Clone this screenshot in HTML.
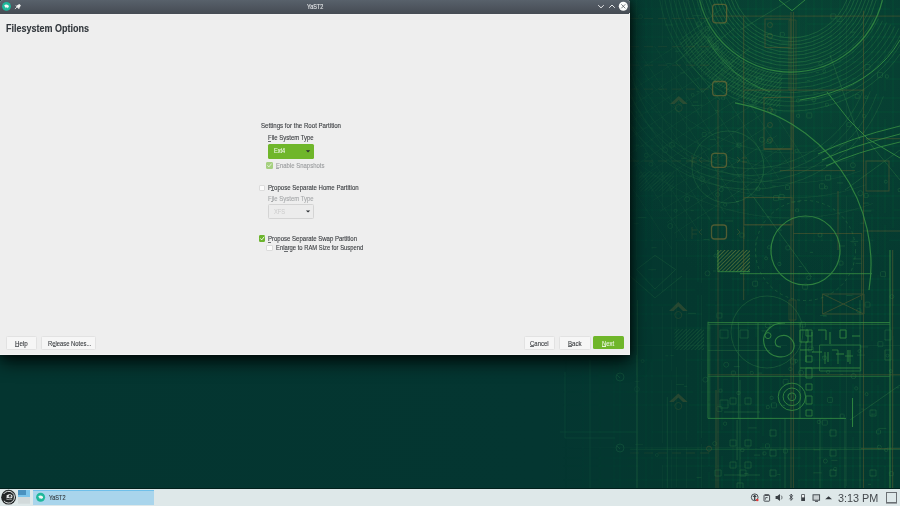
<!DOCTYPE html>
<html><head><meta charset="utf-8">
<style>
*{margin:0;padding:0;box-sizing:border-box}
html,body{width:900px;height:506px;overflow:hidden;background:#04342f;font-family:"Liberation Sans",sans-serif}
.a{position:absolute}
.t{position:absolute;white-space:nowrap;transform-origin:0 0;line-height:1;-webkit-text-stroke:.12px currentColor}
.u{position:absolute;height:.8px;background:#6a6d70}
#wall{left:0;top:0;width:900px;height:489px;background:linear-gradient(90deg,#04322e 0%,#04352f 55%,#0a4637 75%,#0c4a3a 100%)}
#win{left:0;top:0;width:630px;height:355px;background:#eeeeee;box-shadow:0 0 9px rgba(0,0,0,.55),0 7px 18px rgba(0,0,0,.8);border-radius:3px 3px 0 0}
#tb{left:0;top:0;width:630px;height:13.5px;background:linear-gradient(#58616b,#454b53);border-radius:3px 3px 0 0}
.btn{position:absolute;height:12.5px;background:#f6f6f6;border:1px solid #e2e2e2;border-radius:1.5px}
.gbtn{position:absolute;background:#6fb62a;border-radius:1.5px}
.cb{position:absolute;width:6.5px;height:6.5px;border:1px solid #dcdcdc;background:#fcfcfc;border-radius:1px}
#panel{left:0;top:489px;width:900px;height:17px;background:#dee8e9}
</style></head>
<body>
<div id="wall" class="a">
<svg class="a" style="left:0;top:0" width="900" height="489" viewBox="0 0 900 489">
 <defs>
  <linearGradient id="bg" x1="0" y1="0" x2="900" y2="0" gradientUnits="userSpaceOnUse">
   <stop offset="0" stop-color="#043530"/>
   <stop offset=".6" stop-color="#043631"/>
   <stop offset=".75" stop-color="#04382f"/>
   <stop offset="1" stop-color="#053a30"/>
  </linearGradient>
  <radialGradient id="glow" cx="790" cy="60" r="230" gradientUnits="userSpaceOnUse">
   <stop offset="0" stop-color="#0c4e39" stop-opacity=".55"/>
   <stop offset="1" stop-color="#0c4e39" stop-opacity="0"/>
  </radialGradient>
  <linearGradient id="fadeL" x1="560" y1="0" x2="740" y2="0" gradientUnits="userSpaceOnUse">
   <stop offset="0" stop-color="#fff" stop-opacity="0"/>
   <stop offset="1" stop-color="#fff" stop-opacity="1"/>
  </linearGradient>
  <mask id="mL" maskUnits="userSpaceOnUse" x="0" y="0" width="900" height="489"><rect width="900" height="489" fill="url(#fadeL)"/></mask>
  <pattern id="hatch" width="2.6" height="2.6" patternUnits="userSpaceOnUse" patternTransform="rotate(45)">
   <rect width=".9" height="2.6" fill="#3f8f48"/>
  </pattern>
  <pattern id="hatch2" width="2.6" height="2.6" patternUnits="userSpaceOnUse" patternTransform="rotate(45)">
   <rect width=".9" height="2.6" fill="#5f7a3a"/>
  </pattern>
  <filter id="soft" x="0" y="0" width="1" height="1"><feGaussianBlur stdDeviation=".3"/></filter>
 </defs>
 <rect width="900" height="489" fill="url(#bg)"/>
 <rect width="900" height="489" fill="url(#glow)"/>
 <g filter="url(#soft)" mask="url(#mL)">
 <g stroke="#1f6a45" stroke-width=".6" opacity=".38" fill="none"><path d="M566 0V155 M566 182V341 M566 355V489 M583 0V88 M583 93V264 M583 279V366 M583 369V489 M600 0V76 M600 78V255 M600 280V330 M600 349V489 M614 0V155 M614 175V255 M614 274V317 M614 343V489 M620 0V55 M620 56V144 M620 172V273 M620 292V339 M620 363V489 M636.5 0V152 M636.5 170V260 M636.5 276V375 M636.5 395V489 M646 0V41 M646 62V123 M646 137V248 M646 261V322 M646 344V449 M646 459V489 M652 0V113 M652 113V170 M652 188V255 M652 267V334 M652 361V475 M652 487V489 M662.6 0V44 M662.6 71V111 M662.6 117V210 M662.6 239V292 M662.6 307V443 M662.6 465V489 M671.3 0V58 M671.3 76V166 M671.3 190V299 M671.3 309V371 M671.3 380V489 M676.7 0V144 M676.7 168V238 M676.7 242V345 M676.7 367V432 M676.7 432V487 M686.5 0V164 M686.5 169V257 M686.5 271V441 M686.5 447V489 M698 0V138 M698 141V282 M698 295V389 M698 389V489 M701.7 0V117 M701.7 145V190 M701.7 196V283 M701.7 295V360 M701.7 361V438 M701.7 444V489 M709 0V42 M709 66V190 M709 216V331 M709 343V401 M709 403V466 M709 472V489 M716 0V134 M716 145V301 M716 305V468 M722 0V74 M722 101V239 M722 244V323 M722 332V430 M722 456V489 M733 0V88 M733 93V183 M733 204V343 M733 371V489 M738 0V60 M738 73V125 M738 128V195 M738 196V367 M738 397V489 M748 0V140 M748 148V295 M748 321V486 M756 0V173 M756 178V235 M756 239V337 M756 352V410 M756 418V489 M763 0V92 M763 115V159 M763 161V269 M763 282V436 M763 443V489 M771 0V85 M771 94V228 M771 244V317 M771 319V451 M771 455V489 M780 0V173 M780 191V266 M780 284V332 M780 361V405 M780 420V489 M799 0V119 M799 149V197 M799 197V256 M799 271V328 M799 351V470 M799 480V489 M806 0V59 M806 73V252 M806 263V314 M806 342V415 M806 440V489 M814 0V61 M814 82V243 M814 271V330 M814 357V489 M822 0V47 M822 74V241 M822 259V302 M822 321V458 M822 470V489 M831 0V58 M831 60V123 M831 143V212 M831 220V366 M831 389V489 M840 0V157 M840 171V329 M840 355V489 M846.6 0V172 M846.6 196V367 M846.6 367V486 M853 0V62 M853 77V122 M853 129V197 M853 212V376 M853 384V426 M853 437V489 M872 0V91 M872 107V190 M872 214V341 M872 362V489 M878 0V101 M878 111V254 M878 275V379 M878 385V489 M885 0V91 M885 119V213 M885 225V321 M885 339V460 M885 466V489 M893 0V167 M893 178V228 M893 250V306 M893 336V446 M893 472V489 M630 9H775 M790 9H890 M896 9H900 M630 24H786 M807 24H900 M630 37H775 M785 37H834 M835 37H900 M630 52H670 M691 52H792 M810 52H900 M630 62H664 M684 62H748 M760 62H900 M630 79H666 M690 79H788 M795 79H861 M886 79H900 M630 98H689 M703 98H760 M780 98H900 M630 112H710 M716 112H867 M875 112H900 M630 128H662 M686 128H836 M853 128H892 M897 128H900 M630 146H748 M765 146H900 M630 161H700 M712 161H799 M801 161H900 M630 176H759 M763 176H900 M630 196H710 M730 196H761 M773 196H900 M630 210H747 M761 210H874 M894 210H900 M630 218H691 M697 218H789 M801 218H853 M862 218H900 M630 240.2H664 M675 240.2H834 M836 240.2H875 M889 240.2H900 M630 256H767 M791 256H891 M630 279H667 M673 279H719 M732 279H770 M775 279H890 M630 290H695 M710 290H778 M794 290H900 M630 305H682 M706 305H792 M806 305H900 M630 314H702 M718 314H813 M822 314H900 M630 328H713 M722 328H788 M805 328H900 M630 345.6H787 M793 345.6H900 M560 360H619 M635 360H666 M685 360H811 M811 360H852 M868 360H900 M560 376H621 M636 376H689 M711 376H783 M785 376H900 M560 392H693 M701 392H794 M809 392H900 M560 405H676 M689 405H840 M856 405H900 M560 432H639 M652 432H689 M697 432H760 M782 432H817 M818 432H897 M560 447.7H648 M648 447.7H750 M760 447.7H880 M887 447.7H900 M560 458H717 M740 458H801 M817 458H900 M560 466H640 M662 466H803 M803 466H900 M560 480H695 M711 480H781 M798 480H880"/></g>
 <g stroke="#2e7d46" stroke-width=".6" opacity=".55" fill="none"><rect x="806.8" y="113.0" width="5" height="5" rx=".8"/><rect x="822.3" y="420.1" width="5" height="5" rx=".8"/><rect x="825.6" y="175.2" width="5" height="5" rx=".8"/><rect x="763.0" y="451.9" width="3" height="3" rx=".8"/><rect x="877.5" y="72.4" width="5" height="5" rx=".8"/><circle cx="717.6" cy="194.6" r="2"/><rect x="808.7" y="347.0" width="5" height="5" rx=".8"/><rect x="837.0" y="16.5" width="5" height="5" rx=".8"/><rect x="771.5" y="402.9" width="5" height="5" rx=".8"/><circle cx="801.1" cy="372.7" r="2.5"/><circle cx="866.6" cy="394.2" r="1.5"/><circle cx="707.5" cy="273.4" r="2.5"/><rect x="796.3" y="99.2" width="3" height="3" rx=".8"/><path d="M868.0 484.3h3"/><path d="M816.0 72.7h3"/><circle cx="852.9" cy="165.2" r="2.5"/><rect x="770.9" y="109.1" width="5" height="5" rx=".8"/><rect x="840.2" y="414.1" width="4" height="4" rx=".8"/><path d="M771.9 186.1h4"/><rect x="719.0" y="389.1" width="3" height="3" rx=".8"/><path d="M860.3 346.9h8"/><circle cx="813.9" cy="99.8" r="2"/><path d="M861.0 132.2h4"/><path d="M862.9 203.1h6"/><circle cx="853.5" cy="376.1" r="2.5"/><rect x="737.0" y="391.5" width="3" height="3" rx=".8"/><circle cx="702.1" cy="179.1" r="2.5"/><path d="M709.9 139.3h6"/><circle cx="767.6" cy="325.3" r="2.5"/><circle cx="715.4" cy="255.6" r="1.5"/><path d="M840.3 374.4h3"/><rect x="723.0" y="60.0" width="4" height="4" rx=".8"/><rect x="780.3" y="32.3" width="4" height="4" rx=".8"/><rect x="702.2" y="132.4" width="4" height="4" rx=".8"/><path d="M810.0 252.3h3"/><rect x="827.6" y="397.4" width="5" height="5" rx=".8"/><rect x="833.7" y="467.5" width="3" height="3" rx=".8"/><path d="M777.2 474.6h3"/><rect x="785.9" y="245.9" width="4" height="4" rx=".8"/><rect x="819.6" y="183.8" width="5" height="5" rx=".8"/><path d="M754.0 455.1h6"/><circle cx="705.4" cy="379.6" r="2.5"/><rect x="731.3" y="371.0" width="4" height="4" rx=".8"/><path d="M849.7 32.1h6"/><circle cx="714.7" cy="443.6" r="2"/><rect x="750.2" y="371.4" width="3" height="3" rx=".8"/><circle cx="887.5" cy="355.6" r="1.5"/><circle cx="820.7" cy="63.4" r="2"/><rect x="723.6" y="422.2" width="3" height="3" rx=".8"/><path d="M724.9 221.0h8"/><path d="M820.2 315.6h6"/><path d="M855.6 263.3h6"/><rect x="846.9" y="122.7" width="4" height="4" rx=".8"/><rect x="856.9" y="308.6" width="4" height="4" rx=".8"/><path d="M822.0 356.8h4"/><rect x="826.6" y="370.4" width="3" height="3" rx=".8"/><rect x="800.4" y="322.1" width="5" height="5" rx=".8"/><rect x="707.9" y="37.2" width="4" height="4" rx=".8"/><rect x="705.4" y="26.3" width="4" height="4" rx=".8"/><path d="M714.5 49.6h4"/><circle cx="826.2" cy="187.5" r="1.5"/><rect x="767.7" y="245.8" width="3" height="3" rx=".8"/><path d="M860.5 223.2h4"/><rect x="788.9" y="367.5" width="3" height="3" rx=".8"/><path d="M773.8 322.4h6"/><path d="M758.2 373.1h4"/><rect x="785.5" y="185.6" width="4" height="4" rx=".8"/><circle cx="715.7" cy="47.9" r="2"/><path d="M863.1 230.9h3"/><path d="M715.2 110.6h3"/><path d="M839.0 246.0h6"/><rect x="756.6" y="76.7" width="5" height="5" rx=".8"/><rect x="765.4" y="443.9" width="4" height="4" rx=".8"/><path d="M813.9 449.8h6"/><rect x="787.6" y="394.3" width="4" height="4" rx=".8"/><path d="M744.2 473.5h4"/><rect x="716.9" y="406.5" width="5" height="5" rx=".8"/><rect x="779.1" y="194.4" width="5" height="5" rx=".8"/><rect x="773.6" y="195.7" width="5" height="5" rx=".8"/><path d="M812.6 92.9h6"/><rect x="862.4" y="114.4" width="3" height="3" rx=".8"/><path d="M813.5 472.8h8"/><path d="M712.8 271.0h3"/><rect x="766.9" y="139.6" width="4" height="4" rx=".8"/><rect x="716.9" y="313.0" width="5" height="5" rx=".8"/><path d="M863.3 211.0h8"/><path d="M853.1 258.9h8"/><rect x="770.1" y="396.3" width="3" height="3" rx=".8"/><path d="M798.7 266.5h3"/><path d="M782.1 405.4h3"/><path d="M861.2 409.1h3"/><path d="M804.8 349.6h8"/><rect x="884.7" y="448.4" width="3" height="3" rx=".8"/><rect x="898.2" y="188.6" width="3" height="3" rx=".8"/><rect x="777.9" y="262.5" width="3" height="3" rx=".8"/><rect x="794.3" y="359.5" width="3" height="3" rx=".8"/><rect x="855.2" y="94.3" width="4" height="4" rx=".8"/><path d="M703.4 239.4h6"/><rect x="721.7" y="96.8" width="3" height="3" rx=".8"/><circle cx="820.0" cy="235.0" r="2"/><rect x="737.0" y="143.2" width="4" height="4" rx=".8"/><circle cx="825.4" cy="461.1" r="2"/><path d="M797.0 201.7h3"/><rect x="796.5" y="114.3" width="3" height="3" rx=".8"/><circle cx="860.3" cy="193.2" r="2.5"/><rect x="854.8" y="386.9" width="3" height="3" rx=".8"/><path d="M878.4 428.4h8"/><circle cx="859.4" cy="351.1" r="1.5"/><rect x="783.2" y="379.3" width="5" height="5" rx=".8"/><circle cx="726.2" cy="364.7" r="2.5"/><path d="M806.9 80.5h3"/><rect x="740.9" y="448.7" width="3" height="3" rx=".8"/><path d="M716.5 137.8h3"/><rect x="877.9" y="341.7" width="5" height="5" rx=".8"/><rect x="817.3" y="420.4" width="3" height="3" rx=".8"/><rect x="783.4" y="449.0" width="4" height="4" rx=".8"/><circle cx="741.7" cy="269.4" r="1.5"/><rect x="889.3" y="471.7" width="4" height="4" rx=".8"/><circle cx="715.2" cy="155.0" r="2.5"/><rect x="713.4" y="43.8" width="5" height="5" rx=".8"/><path d="M778.8 230.1h3"/><rect x="830.8" y="13.9" width="5" height="5" rx=".8"/><rect x="795.1" y="149.2" width="3" height="3" rx=".8"/><path d="M871.2 414.2h4"/><circle cx="758.1" cy="188.9" r="2"/><circle cx="890.8" cy="371.1" r="1.5"/><path d="M751.3 104.2h6"/><circle cx="761.9" cy="139.7" r="2.5"/><rect x="766.3" y="405.7" width="3" height="3" rx=".8"/><circle cx="824.3" cy="71.2" r="1.5"/><path d="M736.0 201.5h3"/><path d="M720.1 23.6h8"/><path d="M781.4 43.0h8"/><rect x="885.4" y="74.9" width="3" height="3" rx=".8"/><rect x="864.2" y="193.6" width="4" height="4" rx=".8"/><circle cx="824.6" cy="357.7" r="2"/><path d="M896.4 387.8h3"/><rect x="752.1" y="98.8" width="4" height="4" rx=".8"/><circle cx="721.3" cy="189.6" r="2"/><rect x="865.0" y="302.1" width="5" height="5" rx=".8"/><rect x="880.6" y="271.7" width="5" height="5" rx=".8"/><rect x="802.7" y="284.2" width="5" height="5" rx=".8"/><path d="M899.7 348.0h3"/><rect x="825.4" y="103.2" width="3" height="3" rx=".8"/><rect x="795.6" y="208.8" width="3" height="3" rx=".8"/><circle cx="885.8" cy="181.7" r="1.5"/><rect x="790.5" y="359.0" width="5" height="5" rx=".8"/><circle cx="808.7" cy="277.7" r="2"/><path d="M733.7 366.7h6"/><path d="M820.3 67.0h6"/><path d="M837.0 182.9h6"/><circle cx="866.2" cy="97.3" r="1.5"/><path d="M790.9 202.0h4"/><path d="M761.5 330.9h8"/><path d="M823.0 316.0h4"/><rect x="739.9" y="233.1" width="4" height="4" rx=".8"/><rect x="723.7" y="203.2" width="3" height="3" rx=".8"/><rect x="752.7" y="281.2" width="5" height="5" rx=".8"/><path d="M856.8 355.1h8"/><circle cx="891.9" cy="296.6" r="2"/><circle cx="879.3" cy="447.2" r="2"/><path d="M850.3 241.7h8"/><rect x="865.0" y="64.5" width="5" height="5" rx=".8"/><circle cx="766.1" cy="258.4" r="1.5"/><path d="M764.1 34.3h8"/><path d="M846.4 295.4h6"/><rect x="876.5" y="429.9" width="4" height="4" rx=".8"/><path d="M748.5 427.9h8"/><rect x="839.0" y="261.1" width="4" height="4" rx=".8"/><path d="M831.4 460.3h6"/><path d="M690.7 210.7h3"/><circle cx="675.5" cy="210.8" r="1.5"/><circle cx="636.9" cy="389.1" r="2.5"/><circle cx="670.3" cy="226.0" r="2.5"/><circle cx="650.9" cy="164.2" r="2"/><circle cx="687.1" cy="199.1" r="2.5"/><circle cx="646.2" cy="155.3" r="2"/><path d="M651.5 247.7h5"/><path d="M691.5 105.5h8"/><path d="M692.8 102.0h5"/><path d="M693.0 15.7h8"/><path d="M699.7 105.2h3"/><path d="M696.5 477.6h5"/><path d="M680.8 158.5h5"/><path d="M679.9 72.9h5"/><path d="M659.1 89.5h3"/><circle cx="679.7" cy="102.5" r="1.5"/><circle cx="665.1" cy="150.1" r="2.5"/><path d="M666.7 63.7h5"/><circle cx="692.7" cy="94.9" r="1.5"/><path d="M674.8 51.3h5"/><path d="M694.2 43.5h3"/><circle cx="672.0" cy="144.9" r="2.5"/><path d="M636.1 145.2h3"/><circle cx="642.6" cy="361.1" r="1.5"/><circle cx="699.1" cy="24.2" r="2.5"/><circle cx="656.9" cy="455.0" r="1.5"/><path d="M634.5 381.6h5"/><path d="M676.1 384.6h8"/><path d="M687.9 313.3h8"/><path d="M696.6 91.7h3"/><path d="M637.8 217.5h8"/><path d="M684.1 386.3h3"/><path d="M648.2 269.7h8"/><path d="M664.9 25.0h8"/><path d="M633.7 223.7h5"/><circle cx="640.6" cy="16.6" r="2"/><path d="M665.3 355.8h3"/><path d="M635.1 444.4h8"/><path d="M670.6 355.4h3"/></g>
 <g stroke="#348a48" stroke-width=".65" opacity=".6" fill="none"><path d="M735.2 0A60 60 0 0 0 846.8 0 M731.4 0A63.5 63.5 0 0 0 850.6 0 M727.7 0A67 67 0 0 0 854.3 0 M724.0 0A70.5 70.5 0 0 0 858.0 0 M720.3 0A74 74 0 0 0 861.7 0 M716.7 0A77.5 77.5 0 0 0 865.3 0 M713.0 0A81 81 0 0 0 869.0 0 M709.4 0A84.5 84.5 0 0 0 872.6 0 M705.8 0A88 88 0 0 0 876.2 0"/></g>
 <g stroke="#2f8a48" stroke-width=".6" opacity=".55" fill="none"><path d="M701.7 0.0A92 92 0 0 0 874.4 16.9 M697.0 0.0A96.5 96.5 0 0 0 878.5 18.8 M692.4 0.0A101 101 0 0 0 882.5 20.7 M687.8 0.0A105.5 105.5 0 0 0 886.6 22.6 M683.2 0.0A110 110 0 0 0 890.7 24.5 M678.6 0.0A114.5 114.5 0 0 0 894.8 26.4 M674.1 0.0A119 119 0 0 0 898.9 28.3 M669.5 0.0A123.5 123.5 0 0 0 902.9 30.2 M664.9 0.0A128 128 0 0 0 907.0 32.1 M659.8 0.0A133 133 0 0 0 911.5 34.2"/></g>
 <path d="M779.7 107.5A130 130 0 0 1 678.4 43.0L707.9 26.0A96 96 0 0 0 782.6 73.6Z" fill="url(#hatch)" opacity=".3"/>
 <path d="M708 40A115 115 0 0 0 770 92" stroke="#3c9844" stroke-width="1" opacity=".6" fill="none"/>
 <g stroke="#2a7446" stroke-width=".55" opacity=".4" fill="none"><path d="M617.4 0A175 175 0 0 0 850.9 142.4 M602.3 0A190 190 0 0 0 856.0 156.5 M587.2 0A205 205 0 0 0 861.1 170.6 M572.1 0A220 220 0 0 0 866.2 184.7 M552.0 0A240 240 0 0 0 873.1 203.5"/></g>
 <g stroke="#2f7f46" stroke-width=".6" opacity=".5" fill="none"><path d="M630.0 63.0A121 121 0 0 0 863.7 88.9 M630.0 92.0A128 128 0 0 0 870.3 91.3 M630.0 109.3A135 135 0 0 0 876.9 93.7 M630.0 123.4A142 142 0 0 0 883.4 96.1"/></g>
 <g transform="rotate(-33 690 130)" stroke="#2c7a45" stroke-width=".6" opacity=".3" fill="none"><path d="M620 52H760 M620 65H760 M620 78H760 M620 91H760 M620 104H760 M620 117H760 M620 130H760 M620 143H760 M620 156H760 M620 169H760 M620 182H760 M620 195H760 M620 208H760 M610 40V220 M626 40V220 M642 40V220 M658 40V220 M674 40V220 M690 40V220 M706 40V220 M722 40V220 M738 40V220 M754 40V220 M770 40V220"/></g>
 <g transform="rotate(-42 704 64)" opacity=".45"><rect x="684" y="44" width="40" height="40" fill="none" stroke="#3f8f48" stroke-width=".7"/></g>
 <rect x="717" y="250" width="33" height="21.7" fill="url(#hatch2)" opacity=".75"/>
 <rect x="674.5" y="329" width="29.5" height="21" fill="url(#hatch)" opacity=".3"/>
 <rect x="638.7" y="171.7" width="35" height="19.6" fill="url(#hatch)" opacity=".2"/>
 <g stroke="#2f8046" stroke-width=".7" opacity=".55" fill="none">
  <circle cx="728" cy="167" r="36"/>
  <circle cx="805.5" cy="250.5" r="50" stroke-dasharray="3 3"/>
  <circle cx="767" cy="332" r="36"/>
  <path d="M655 255.4 L675.6 269.6 L655 289 L636.5 269.6Z M630 276 L655 297.8 L682 276"/>
  <path d="M680 40 L720 10 M677 47 L720 100 M700 30 L745 85 M690 62 L735 28 M712 78 L750 48"/>
  <path d="M753 196.5 L811.7 277 M866 138.7 L900 180 M740 30 L790 0 M830 55 L860 140 M845 190 L900 150 M850 420 L900 385"/>
 </g>
 <g stroke="#635f2e" stroke-width=".9" opacity=".55" fill="none">
  <path d="M712 16.1H900 M791 11.9V489 M793.4 11.9V489 M863.5 10.7V489 M743.7 16V300 M718 100V489 M716 390V489"/>
  <path d="M743.7 90.1H864.6 M866 138.7H900 M780 170.6H855 M744 224.8H792 M793 233.5H862 M866 231H900 M708 374.8H900 M861 448.7H900 M892.6 250V489 M838 191V250 M861.7 233.5V300 M764 148.5H792"/>
  <rect x="765" y="19" width="26" height="28.4"/>
  <rect x="764" y="97.5" width="28" height="52"/>
  <rect x="744" y="197.6" width="48" height="27.2"/>
  <rect x="866" y="161" width="23" height="30"/>
  <path d="M822.6 294H864V314H822.6Z M822.6 294L864 314 M864 294L822.6 314"/>
  <path d="M789 20 h7 v70 h-7z M789 300 h7 v20 h-7z" stroke-width=".7"/>
  <circle cx="709" cy="448.7" r="2.5"/>
 </g>
 <g stroke="#635f2e" stroke-width=".8" opacity=".4" fill="none">
  <path d="M630 18.5H712 M630 46.7H712 M630 65.2H712 M630 89.1H712 M630 161H712 M630 453H709" stroke-dasharray="9 5"/>
 </g>
 <g stroke="#7d6f34" stroke-width="1.3" opacity=".7" fill="none">
  <rect x="712.6" y="4.3" width="14" height="18.5" rx="3"/>
  <rect x="712.6" y="81.5" width="14" height="14.2" rx="3"/>
  <rect x="711.5" y="153.3" width="15" height="14" rx="3"/>
  <rect x="711.5" y="225" width="15" height="14" rx="3"/>
 </g>
 <g fill="#7a6a36" opacity=".45">
  <path d="M670 104 L678.8 96 L687.6 104 L683 104 L678.8 100 L674.6 104Z"/>
  <path d="M669 311 L678.3 302 L687.6 311 L683 311 L678.3 306.5 L673.6 311Z"/>
  <path d="M669 402 L678.3 393.5 L687.6 402 L683 402 L678.3 397.5 L673.6 402Z"/>
 </g>
 <g stroke="#6a6a30" stroke-width=".6" opacity=".55" fill="none">
  <circle cx="678.8" cy="108" r="3.5"/><circle cx="678.3" cy="315" r="3.5"/><circle cx="678.3" cy="406" r="3.5"/>
  <circle cx="770" cy="110" r="2.5"/><circle cx="770" cy="125" r="2.5"/><circle cx="770" cy="140" r="2.5"/>
  <circle cx="770" cy="25" r="2.5"/><circle cx="770" cy="36" r="2.5"/>
  <path d="M702 157l-3 3 3 3 M737 157l3 3-3 3 M702 229l-3 3 3 3 M737 229l3 3-3 3 M692 158h5 M692 162h5 M692 230h5 M692 234h5 M742 158h5 M742 162h5"/>
  <path d="M692 155v12 M692 227v12 M744 227v12"/>
 </g>
 <g stroke="#3c9844" stroke-width="1" opacity=".75" fill="none">
  <path d="M699.6 0 A94 94 0 0 0 882.4 0" stroke-width="1.2"/>
  <path d="M735 102.9 A164 164 0 0 1 869 290" stroke-width="1.2"/>
  <path d="M900 40 Q878 78 830 93 Q815 98 800 100"/>
  <path d="M827 92 L849 120 L868 139 L900 158 M818 154 Q850 138 900 126 M822 160 Q852 146 900 134 M826 166 Q856 152 900 142"/>
  <circle cx="805.5" cy="250.5" r="34.5" stroke-width="1.2"/>
  <path d="M708 322.6H890 M708 321.7V418.4 M708 418.4H846 M890 250V489 M852.5 398V427 M740 273.7H872"/>
  <circle cx="791.9" cy="396.8" r="13.7"/><circle cx="791.9" cy="396.8" r="8.8"/><circle cx="791.9" cy="396.8" r="3.9"/>
  <path d="M785 323 C770 322 760 335 765 347 C770 358 785 360 792 352 C798 344 790 333 780 336 C773 339 774 347 781 347" stroke-width="1.1"/>
  <circle cx="768" cy="335.6" r="3"/>
  <path d="M800 330h8v12h-8z M812 332v10 M818 330h8v10 M830 332v12 M840 330h6v8h-6z M800 350h6v12 M812 352h10 M828 352v10 M836 354h8 M848 350v12 M852 336h8 M800 368h60"/>
  <path d="M718 250V271.7H750 M779 0 L792 10.7 L805 0"/>
  <path d="M819.6 345H860.7V371H819.6Z M758 323V419" opacity=".7"/>
  <path d="M708 324.4H890 M709.8 324V418.4 M800 323V419 M708 376.5H890" opacity=".55"/>
  <path d="M806 330h6v6h-6z M806 342h6v8h-6z M806 356h6v6h-6z M806 368h6v10h-6z M806 384h6v6h-6z M806 396h6v8h-6z M806 410h6v6h-6z" stroke-width=".8"/>
  <path d="M825 352v12 M832 350h6v14 M845 356h8 M850 350v14" stroke-width=".8"/>
 </g>
 <g stroke="#2f8046" stroke-width=".7" opacity=".6" fill="none">
  <path d="M720 330h8v8h-8z M740 330h8v8h-8z M720 400h8v8h-8z M770 430h6v6h-6z M770 450h6v6h-6z M770 470h6v6h-6z M740 470h6v6h-6z M830 430h6v6h-6z M830 450h6v6h-6z M830 470h6v6h-6z M870 410h6v6h-6z M870 470h6v6h-6z M715 470h6v6h-6z M885 330h6v10h-6z M885 350h6v10h-6z"/>
  <path d="M630 449.3H900 M860 300V489 M740 380V489 M785 418V489 M820 418V489 M845 418V489 M738.6 322V419 M708 350.4H770 M667.3 397V489 M637.5 300V489"/>
  <path d="M730 398h6v6h-6z M745 398h6v6h-6z M730 440h6v6h-6z M745 440h6v6h-6z M730 462h6v6h-6z M745 462h6v6h-6z M737 483h6v6h-6z M737 420v40 M724 412H760 M724 475H760"/>
 </g>
 </g>
 <g stroke="#1f6a45" stroke-width=".7" opacity=".55" fill="none"><circle cx="620" cy="377" r="4"/><circle cx="620" cy="448" r="4"/><path d="M565 372V438H615 M636.5 355V489 M560 432H636 M590 360V489" opacity=".6"/><path d="M617 375l3 3M617 446l3 3"/></g>
</svg>
</div>

<div id="win" class="a">
  <div id="tb" class="a"></div>
  <svg class="a" style="left:0;top:0" width="630" height="13" viewBox="0 0 630 13">
    <circle cx="6.5" cy="6.4" r="4.4" fill="#1db99b"/>
    <path d="M4.2 5.6 C5 4.4 7 4.3 8.3 5.3 C9 5.9 9 7 8.4 7.6 L7.8 7.4 L7.6 8.4 L7 7.6 L6 7.6 L5.6 8.4 L5.4 7.2 C4.9 6.9 4.6 6.4 4.2 5.6Z" fill="#f4f7f6"/>
    <path d="M15.2 8.8 L17.2 6.8" stroke="#f0f0f0" stroke-width=".8" stroke-linecap="round"/><path d="M16.4 5.8 L19.4 3.9 L20.9 5.4 L19 8.4 Z" fill="#f2f2f2"/><path d="M15.9 5.6 L19.2 8.9" stroke="#f2f2f2" stroke-width="1"/>
    <path d="M598.2 5.2 L601 7.8 L603.8 5.2" stroke="#e6e8ea" stroke-width="1" fill="none"/>
    <path d="M609.2 7.8 L612 5 L614.8 7.8" stroke="#e6e8ea" stroke-width="1" fill="none"/>
    <circle cx="623.3" cy="6.3" r="4.5" fill="#fcfcfc"/>
    <path d="M621.3 4.3 L625.3 8.3" stroke="#4f545a" stroke-width=".75"/><path d="M625.3 4.3 L621.3 8.3" stroke="#4f545a" stroke-width=".75"/>
  </svg>
  <div class="t" style="left:306.5px;top:4.3px;font-size:6.3px;color:#e6e8ea;transform:scaleX(.87);-webkit-text-stroke:.1px currentColor">YaST2</div>
  <div class="a" style="left:0;top:13.5px;width:630px;height:1px;background:#f1f1f1"></div>
  <div class="a" style="left:0;top:354px;width:630px;height:1px;background:#f4f4f4"></div>
  <div class="a" style="left:629px;top:13px;width:1px;height:342px;background:#f2f2f2"></div>
  <!-- title -->
  <div class="t" style="left:6px;top:22.5px;font-size:11px;font-weight:bold;color:#31363b;transform:scaleX(.818)">Filesystem Options</div>
  <div class="t" style="left:261px;top:121.5px;font-size:7px;color:#3a3d40;transform:scaleX(.875)">Settings for the Root Partition</div>
  <div class="t" style="left:268px;top:134px;font-size:7px;color:#3a3d40;transform:scaleX(.853)">File System Type</div>
  <div class="gbtn" style="left:268px;top:144px;width:46px;height:15px"></div>
  <div class="t" style="left:274.4px;top:147.3px;font-size:7px;color:#eef7e6;transform:scaleX(.8)">Ext4</div>
  <div class="cb" style="left:266px;top:162px;background:#a5d07f;border-color:#a5d07f"></div>
  <div class="t" style="left:275.5px;top:161.5px;font-size:7px;color:#9a9c9e;transform:scaleX(.852)">Enable Snapshots</div>

  <div class="cb" style="left:258.7px;top:184.5px"></div>
  <div class="t" style="left:268px;top:183.5px;font-size:7px;color:#3a3d40;transform:scaleX(.866)">Propose Separate Home Partition</div>
  <div class="t" style="left:268px;top:194.5px;font-size:7px;color:#a6a8aa;transform:scaleX(.853)">File System Type</div>
  <div class="a" style="left:268px;top:204px;width:46px;height:15px;border:1px solid #d4d4d4;border-radius:1.5px;background:#ececec"></div>
  <div class="t" style="left:274px;top:207.7px;font-size:7px;color:#cbcbcb;transform:scaleX(.82);-webkit-text-stroke:0">XFS</div>

  <div class="cb" style="left:258.8px;top:235px;width:6.5px;height:6.7px;background:#6cb52d;border-color:#6cb52d"></div>
  <div class="t" style="left:268px;top:234.5px;font-size:7px;color:#3a3d40;transform:scaleX(.86)">Propose Separate Swap Partition</div>
  <div class="cb" style="left:266.4px;top:244.5px"></div>
  <div class="t" style="left:276px;top:244px;font-size:7px;color:#3a3d40;transform:scaleX(.833)">Enlarge to RAM Size for Suspend</div>

  <div class="btn" style="left:6px;top:336px;width:30.8px;height:13.5px"></div>
  <div class="t" style="left:15px;top:339.5px;font-size:7px;color:#3a3d40;transform:scaleX(.889)">Help</div>
  <div class="btn" style="left:41px;top:336px;width:55px;height:13.5px"></div>
  <div class="t" style="left:47.5px;top:339.5px;font-size:7px;color:#3a3d40;transform:scaleX(.836)">Release Notes...</div>
  <div class="btn" style="left:524px;top:336px;width:30.5px;height:13.5px"></div>
  <div class="t" style="left:530px;top:339.5px;font-size:7px;color:#3a3d40;transform:scaleX(.858)">Cancel</div>
  <div class="btn" style="left:559px;top:336px;width:31.6px;height:13.5px"></div>
  <div class="t" style="left:568px;top:339.5px;font-size:7px;color:#3a3d40;transform:scaleX(.88)">Back</div>
  <div class="gbtn" style="left:593px;top:336.2px;width:31px;height:13.2px"></div>
  <div class="t" style="left:602px;top:339.8px;font-size:7px;color:#e6f3da;transform:scaleX(.85)">Next</div>
  <div class="u" style="left:268px;top:141px;width:2.5px"></div>
  <div class="u" style="left:275.5px;top:168px;width:3px;background:#a8aaac"></div>
  <div class="u" style="left:271.4px;top:190.1px;width:2.4px"></div>
  <div class="u" style="left:271.2px;top:201.3px;width:1.6px;background:#a8aaac"></div>
  <div class="u" style="left:268px;top:242px;width:3.4px"></div>
  <div class="u" style="left:284px;top:251.2px;width:3.6px"></div>
  <div class="u" style="left:15px;top:346px;width:3.5px"></div>
  <div class="u" style="left:53.3px;top:346px;width:2.7px"></div>
  <div class="u" style="left:530px;top:346px;width:3.5px"></div>
  <div class="u" style="left:568px;top:346.2px;width:3.8px"></div>
  <div class="u" style="left:602.1px;top:346.2px;width:3.7px;background:#e4f2d6"></div>
  <svg class="a" style="left:0;top:0" width="630" height="356" viewBox="0 0 630 356">
    <path d="M305.9 150.2 H310.2 L308.05 152.4Z" fill="#2a2e32"/>
    <path d="M305.9 210.5 H310.2 L308.05 212.6Z" fill="#2a2e32"/>
    <path d="M267.4 165.3 L268.9 166.9 L271.6 163.6" stroke="#e9f4df" stroke-width=".9" fill="none"/>
    <path d="M260.3 238.4 L261.7 239.9 L264.3 236.7" stroke="#ffffff" stroke-width=".9" fill="none"/>
  </svg>
</div>

<div class="a" style="left:0;top:488px;width:900px;height:1px;background:#01201c"></div>
<div id="panel" class="a">
  <svg class="a" style="left:0;top:0" width="900" height="17" viewBox="0 489 900 17">
    <!-- kickoff -->
    <circle cx="8.6" cy="497.2" r="7.4" fill="#232627"/>
    <path d="M3.6 494 A5.9 5.9 0 1 1 3.9 500.8" fill="none" stroke="#e2e7e8" stroke-width="1"/>
    <path d="M6.4 495.8 C7.6 494.2 10.8 493.8 12 495 C12.8 495.8 12.7 497.4 11.9 498 C11 498.5 9.4 498.4 8.4 498 L6.2 498.2 C6.8 497.5 6.9 496.7 6.4 495.8Z" fill="#e8eaeb"/>
    <circle cx="10" cy="496.3" r="1.2" fill="#232627"/>
    <circle cx="10.1" cy="496.2" r=".45" fill="#e8eaeb"/>
    <path d="M6.4 499.4 Q9.5 500 12.2 499.2" stroke="#e8eaeb" stroke-width=".55" fill="none"/>
    <!-- pager -->
    <rect x="18" y="490" width="12" height="7" fill="#7cc4ea"/>
    <rect x="18" y="490" width="8" height="5" fill="#4b92bf"/>
    <rect x="18" y="497" width="12" height="6.7" fill="#d2dadb"/>
    <!-- task button -->
    <rect x="33" y="490" width="121" height="15" fill="#a9d5ec"/>
    <rect x="33" y="490" width="121" height="1" fill="#6fc0ea"/>
    <circle cx="40.6" cy="497.3" r="4.5" fill="#1fb89b"/>
    <path d="M38.3 496.6 C39.1 495.3 41.2 495.2 42.5 496.2 C43.2 496.8 43.2 497.9 42.6 498.5 L42 498.3 L41.8 499.3 L41.2 498.5 L40.2 498.5 L39.8 499.3 L39.6 498.1 C39.1 497.8 38.7 497.4 38.3 496.6Z" fill="#f4f7f6"/>
    <!-- tray -->
    <g fill="none" stroke="#3b4045" stroke-width=".9">
      <circle cx="754.7" cy="497.3" r="3.4"/>
      <path d="M754.7 500.2 V496.6" stroke-width="1.3"/>
      <rect x="764" y="495" width="5.6" height="6.2" rx=".6"/>
      <path d="M765.4 497.6 H767.6 M765.4 498.2 V499.6"/>
      <path d="M789.5 495.2 L792.6 498.6 L791 500.4 V494 L792.6 495.8 L789.5 499.2"/>
      <rect x="813" y="494.8" width="6.6" height="5.4" fill="#c9cfd1"/>
      <path d="M815 501.4 H818"/>
    </g>
    <rect x="764.8" y="494.4" width="4" height="1.4" fill="#3b4045"/>
    <path d="M752.6 497 L754.7 494.6 L756.8 497Z" fill="#3b4045"/>
    <circle cx="757.3" cy="500" r="1.3" fill="#e93a3a"/>
    <path d="M775.6 496 H777.3 L780 494 V501 L777.3 499 H775.6Z" fill="#3b4045"/>
    <path d="M781.2 495.6 C782.2 496.6 782.2 498.4 781.2 499.4" stroke="#3b4045" stroke-width=".8" fill="none"/>
    <rect x="801.2" y="494.2" width="3.8" height="6.8" rx=".6" fill="#3b4045"/>
    <rect x="801.9" y="495" width="2.4" height="2.4" fill="#eff0f1"/>
    <path d="M825.2 499.2 L828.6 496.2 L832 499.2Z" fill="#31363b"/>
    <!-- show desktop -->
    <rect x="886.5" y="492.5" width="10" height="10.5" fill="none" stroke="#6b7074" stroke-width="1"/>
    <rect x="886" y="502" width="11" height="1.2" fill="#6b7074"/>
  </svg>
  <div class="t" style="left:48.5px;top:5.5px;font-size:6.5px;color:#31363b;transform:scaleX(.85)">YaST2</div>
  <div class="t" style="left:837.5px;top:4.2px;font-size:11px;color:#43484c;transform:scaleX(.985);-webkit-text-stroke:0">3:13 PM</div>
</div>
</body></html>
